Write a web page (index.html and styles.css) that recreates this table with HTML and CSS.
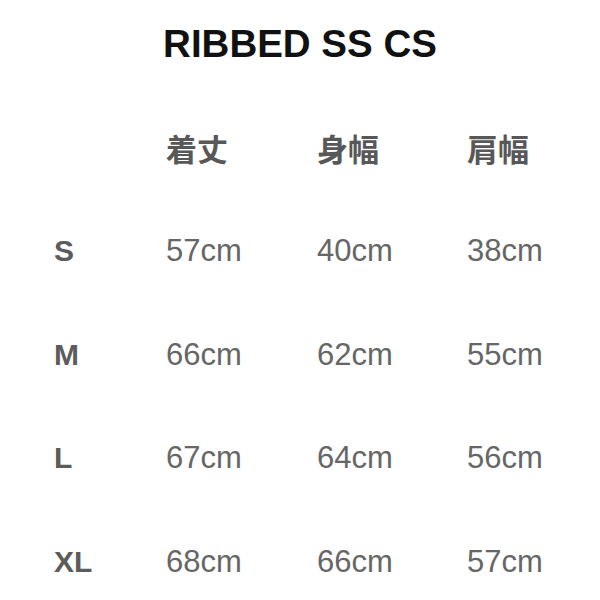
FILE: index.html
```html
<!DOCTYPE html>
<html lang="ja">
<head>
<meta charset="utf-8">
<link rel="stylesheet" href="styles.css">
</head>
<body>
<div class="page">
  <h1 class="title">RIBBED SS CS</h1>
  <div class="grid">
    <div class="cell"></div>
    <div class="cell head">着丈</div>
    <div class="cell head">身幅</div>
    <div class="cell head">肩幅</div>

    <div class="cell size">S</div>
    <div class="cell val">57cm</div>
    <div class="cell val">40cm</div>
    <div class="cell val">38cm</div>

    <div class="cell size">M</div>
    <div class="cell val">66cm</div>
    <div class="cell val">62cm</div>
    <div class="cell val">55cm</div>

    <div class="cell size">L</div>
    <div class="cell val">67cm</div>
    <div class="cell val">64cm</div>
    <div class="cell val">56cm</div>

    <div class="cell size">XL</div>
    <div class="cell val">68cm</div>
    <div class="cell val">66cm</div>
    <div class="cell val">57cm</div>
  </div>
</div>
</body>
</html>
```
FILE: styles.css
```css
html, body {
  margin: 0;
  padding: 0;
  background: #ffffff;
}
.page {
  width: 600px;
  font-family: "Liberation Sans", Arial, "Noto Sans CJK JP", sans-serif;
}
.title {
  margin: 0;
  height: 96px;
  line-height: 87px;
  text-align: center;
  font-size: 38.5px;
  font-weight: bold;
  color: #111111;
}
.grid {
  display: grid;
  grid-template-columns: 112px 151px 150px 1fr;
  grid-auto-rows: 103.5px;
  padding-left: 54px;
  align-items: center;
}
.cell {
  line-height: 40px;
}
.head {
  font-family: "Noto Sans CJK JP", sans-serif;
  font-weight: bold;
  font-size: 31px;
  color: #585858;
}
.size {
  font-weight: bold;
  font-size: 30px;
  color: #5c5c5c;
}
.val {
  font-size: 31px;
  color: #666666;
}
```
